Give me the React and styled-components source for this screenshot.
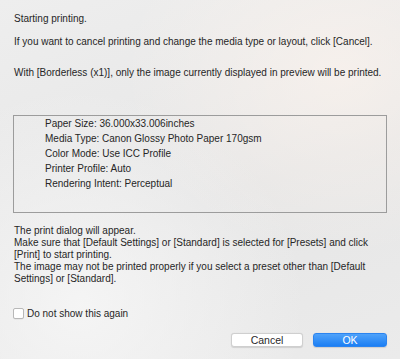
import styled, { createGlobalStyle } from 'styled-components';

const GlobalStyle = createGlobalStyle`
  html, body {
    margin: 0;
    padding: 0;
  }
  body {
    font-family: "Liberation Sans", Arial, sans-serif;
    color: #262626;
  }
`;

const Dialog = styled.div`
  width: 400px;
  height: 359px;
  box-sizing: border-box;
  padding: 13px 13px 0 13px;
  background:
    radial-gradient(ellipse at 85% 20%, rgba(255, 245, 238, 0.6), rgba(255, 255, 255, 0) 45%),
    radial-gradient(ellipse at 20% 85%, rgba(248, 248, 248, 0.8), rgba(255, 255, 255, 0) 50%),
    linear-gradient(160deg, #eeeeee 0%, #e6e6e6 55%, #ebebeb 100%);
  display: flex;
  flex-direction: column;
  font-size: 10px;
`;

const Para = styled.p`
  margin: 0 0 ${p => p.$gap || 0}px 1px;
  line-height: 12px;
  white-space: nowrap;
`;

const InfoBox = styled.div`
  border: 1px solid #9c9c9c;
  padding: 0 0 21px 31px;
  margin-bottom: 12px;
`;

const InfoLine = styled.div`
  line-height: 15px;
  white-space: nowrap;
`;

const Notes = styled.div`
  margin-left: 1px;
  line-height: 12px;
  white-space: nowrap;
`;

const CheckRow = styled.label`
  display: flex;
  align-items: center;
  gap: 3px;
  margin-top: 22px;
  height: 12px;
`;

const CheckBox = styled.span`
  width: 9px;
  height: 9px;
  border: 0.5px solid #b8b8b8;
  border-radius: 2px;
  background: #ffffff;
  box-shadow: 0 0.5px 0.5px rgba(0, 0, 0, 0.08);
`;

const ButtonRow = styled.div`
  display: flex;
  justify-content: flex-end;
  gap: 10px;
  margin-top: 14px;
`;

const Button = styled.button`
  width: ${p => p.$w}px;
  height: 14px;
  padding: 0;
  border-radius: 3px;
  font-family: "Liberation Sans", Arial, sans-serif;
  font-size: 10.5px;
  line-height: 12px;
  border: 0.5px solid ${p => (p.$primary ? '#2b84f0' : '#cfcfcf')};
  color: ${p => (p.$primary ? '#ffffff' : '#2a2a2a')};
  background: ${p =>
    p.$primary ? 'linear-gradient(#4fa2fa, #1c7ff4)' : '#ffffff'};
  box-shadow: 0 0.5px 1px rgba(0, 0, 0, 0.12);
`;

export default function App() {
  return (
    <>
      <GlobalStyle />
      <Dialog>
        <Para $gap={11}>Starting printing.</Para>
        <Para $gap={19}>
          If you want to cancel printing and change the media type or layout, click [Cancel].
        </Para>
        <Para $gap={36}>
          With [Borderless (x1)], only the image currently displayed in preview will be printed.
        </Para>
        <InfoBox>
          <InfoLine>Paper Size: 36.000x33.006inches</InfoLine>
          <InfoLine>Media Type: Canon Glossy Photo Paper 170gsm</InfoLine>
          <InfoLine>Color Mode: Use ICC Profile</InfoLine>
          <InfoLine>Printer Profile: Auto</InfoLine>
          <InfoLine>Rendering Intent: Perceptual</InfoLine>
        </InfoBox>
        <Notes>
          The print dialog will appear.
          <br />
          Make sure that [Default Settings] or [Standard] is selected for [Presets] and click
          <br />
          [Print] to start printing.
          <br />
          The image may not be printed properly if you select a preset other than [Default
          <br />
          Settings] or [Standard].
        </Notes>
        <CheckRow>
          <CheckBox />
          <span>Do not show this again</span>
        </CheckRow>
        <ButtonRow>
          <Button $w={72}>Cancel</Button>
          <Button $w={74} $primary>OK</Button>
        </ButtonRow>
      </Dialog>
    </>
  );
}
